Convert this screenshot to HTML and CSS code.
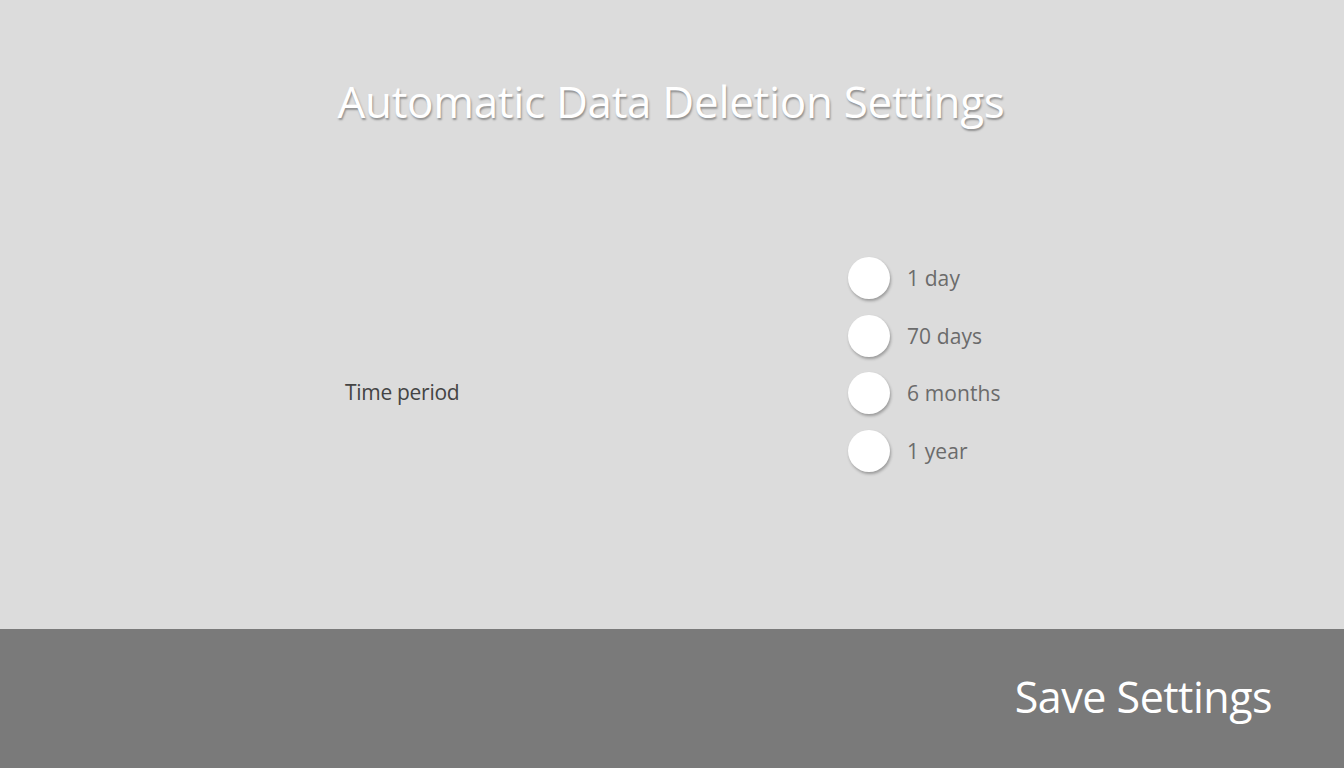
FILE: index.html
```html
<!DOCTYPE html>
<html lang="en">
  <head>
    <meta charset="UTF-8" />
    <meta name="viewport" content="width=device-width, initial-scale=1.0" />
    <title>Automatic Data Deletion Settings</title>
    <link rel="stylesheet" href="styles.css">
  </head>
  <body>
    <div class="page">
      <main class="content">
        <h1 class="title">Automatic Data Deletion Settings</h1>
        <div class="form-row">
          <span class="label">Time period</span>
          <div class="options">
            <label class="option">
              <span class="radio"></span>
              <span class="text">1 day</span>
            </label>
            <label class="option">
              <span class="radio"></span>
              <span class="text">70 days</span>
            </label>
            <label class="option">
              <span class="radio"></span>
              <span class="text">6 months</span>
            </label>
            <label class="option">
              <span class="radio"></span>
              <span class="text">1 year</span>
            </label>
          </div>
        </div>
      </main>
      <footer class="bar">
        <button class="save">Save Settings</button>
      </footer>
    </div>
  </body>
</html>
```

FILE: styles.css
```css
* {
  margin: 0;
  padding: 0;
  box-sizing: border-box;
}
body {
  width: 1344px;
  height: 768px;
  overflow: hidden;
  font-family: "Open Sans", "Noto Sans", sans-serif;
  background: #dcdcdc;
}
.page {
  height: 100%;
  display: flex;
  flex-direction: column;
}
.content {
  height: 629px;
  display: flex;
  flex-direction: column;
  background: #dcdcdc;
}
.title {
  padding-top: 72px;
  text-align: center;
  font-weight: 400;
  font-size: 44px;
  letter-spacing: -0.3px;
  line-height: 58px;
  color: #fff;
  text-shadow: 1px 2px 2px rgba(0, 0, 0, 0.35);
  padding-right: 2px;
}
.form-row {
  display: flex;
  align-items: center;
  padding-top: 127px;
  padding-left: 345px;
}
.label {
  width: 503px;
  margin-top: 56px;
  font-size: 21px;
  color: #444;
  letter-spacing: -0.3px;
}
.options {
  display: flex;
  flex-direction: column;
  gap: 15.5px;
}
.option {
  display: flex;
  align-items: center;
  gap: 17px;
}
.radio {
  width: 42px;
  height: 42px;
  border-radius: 50%;
  background: #fff;
  box-shadow: 1px 2px 3px rgba(0, 0, 0, 0.3);
}
.text {
  font-size: 21px;
  color: #6b6b6b;
  letter-spacing: 0.1px;
}
.bar {
  flex: 1;
  background: #7a7a7a;
  display: flex;
  align-items: center;
  justify-content: flex-end;
  padding-right: 72px;
}
.save {
  border: none;
  background: none;
  font-family: "Open Sans", "Noto Sans", sans-serif;
  font-size: 43px;
  color: #fff;
  letter-spacing: -0.5px;
  cursor: pointer;
  margin-bottom: 4px;
}
```
